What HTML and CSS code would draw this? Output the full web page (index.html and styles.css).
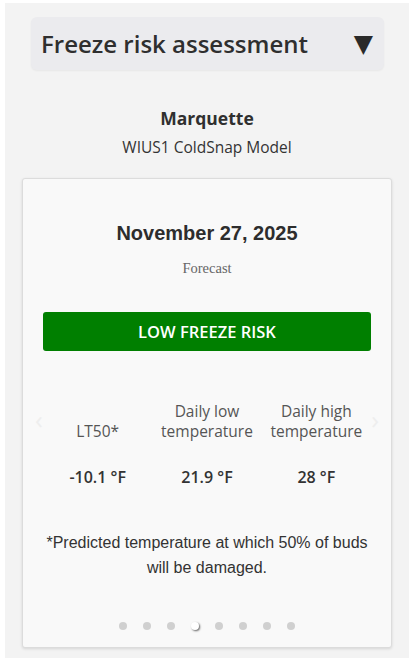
FILE: index.html
```html
<!DOCTYPE html>
<html>
<head>
<meta charset="utf-8">
<link rel="stylesheet" href="styles.css">
</head>
<body>
<div class="panel">
  <div class="summary">
    <span class="summary-title">Freeze risk assessment</span>
    <span class="summary-caret">▼</span>
  </div>
  <div class="site">
    <div class="site-name">Marquette</div>
    <div class="site-model">WIUS1 ColdSnap Model</div>
  </div>
  <div class="card">
    <div class="date">November 27, 2025</div>
    <div class="kind">Forecast</div>
    <div class="risk">LOW FREEZE RISK</div>
    <div class="stats">
      <span class="arrow arrow-left">‹</span>
      <div class="stat">
        <div class="stat-label">LT50*</div>
        <div class="stat-value">-10.1 °F</div>
      </div>
      <div class="stat">
        <div class="stat-label">Daily low temperature</div>
        <div class="stat-value">21.9 °F</div>
      </div>
      <div class="stat">
        <div class="stat-label">Daily high temperature</div>
        <div class="stat-value">28 °F</div>
      </div>
      <span class="arrow arrow-right">›</span>
    </div>
    <p class="note">*Predicted temperature at which 50% of buds will be damaged.</p>
    <div class="dots">
      <span class="dot"></span><span class="dot"></span><span class="dot"></span><span class="dot active"></span><span class="dot"></span><span class="dot"></span><span class="dot"></span><span class="dot"></span>
    </div>
  </div>
</div>
</body>
</html>
```

FILE: styles.css
```css
html, body {
  margin: 0;
  padding: 0;
  background: #ffffff;
}
body {
  font-family: "Open Sans", Lato, sans-serif;
  color: #333;
}
.panel {
  margin: 3px 5px 0 5px;
  background: #f3f3f3;
  padding: 14px 17px 0 17px;
  height: 655px;
  box-sizing: border-box;
}
.summary {
  margin: 0 8px 0 9px;
  height: 53px;
  background: #ebebee;
  border-radius: 6px;
  display: flex;
  align-items: center;
  justify-content: space-between;
  padding: 0 11px 0 10px;
  box-shadow: 0 1px 2px rgba(0,0,0,0.05);
}
.summary-title {
  font-size: 24px;
  font-weight: 600;
  color: #2f2f2f;
}
.summary-caret {
  font-family: "DejaVu Sans", sans-serif;
  font-size: 25px;
  color: #2a2a2a;
}
.site {
  text-align: center;
  padding-top: 37px;
  height: 108px;
  box-sizing: border-box;
}
.site-name {
  font-size: 17.5px;
  font-weight: 700;
  color: #2f2f2f;
  line-height: 22px;
}
.site-model {
  font-size: 15.5px;
  color: #333;
  margin-top: 8px;
  line-height: 20px;
}
.card {
  background: #f9f9f9;
  border: 1px solid #dcdcdc;
  border-radius: 3px;
  box-shadow: 0 1px 3px rgba(0,0,0,0.12);
  height: 470px;
  box-sizing: border-box;
  padding: 42px 20px 0 20px;
  text-align: center;
}
.date {
  font-family: "Liberation Sans", Arial, sans-serif;
  font-weight: 700;
  font-size: 20px;
  color: #2d2d2d;
  line-height: 24px;
}
.kind {
  font-family: "Liberation Serif", serif;
  font-size: 14.5px;
  color: #666;
  margin-top: 14px;
  line-height: 18px;
}
.risk {
  margin-top: 35px;
  background: #007f00;
  color: #fff;
  border-radius: 3px;
  height: 39px;
  display: flex;
  align-items: center;
  justify-content: center;
  font-size: 16.5px;
  font-weight: 600;
}
.stats {
  position: relative;
  margin-top: 50px;
  display: grid;
  grid-template-columns: 1fr 1fr 1fr;
}
.stat-label {
  font-size: 15.5px;
  color: #555;
  line-height: 20px;
  height: 40px;
  display: flex;
  align-items: flex-end;
  justify-content: center;
}
.stat-value {
  font-size: 16px;
  font-weight: 600;
  color: #333;
  margin-top: 26px;
  line-height: 20px;
}
.arrow {
  position: absolute;
  top: 8px;
  font-size: 26px;
  color: #eeeeee;
  line-height: 20px;
}
.arrow-left { left: -8px; }
.arrow-right { right: -8px; }
.note {
  font-family: "Liberation Sans", Arial, sans-serif;
  font-size: 16px;
  line-height: 25px;
  color: #333;
  margin: 43px 0 0 0;
}
.dots {
  margin-top: 42px;
  display: flex;
  justify-content: center;
  gap: 16px;
}
.dot {
  width: 8px;
  height: 8px;
  border-radius: 50%;
  background: #d0d0d0;
}
.dot.active {
  background: #fff;
  box-shadow: 1px 1px 2px rgba(0,0,0,0.6);
}
```
